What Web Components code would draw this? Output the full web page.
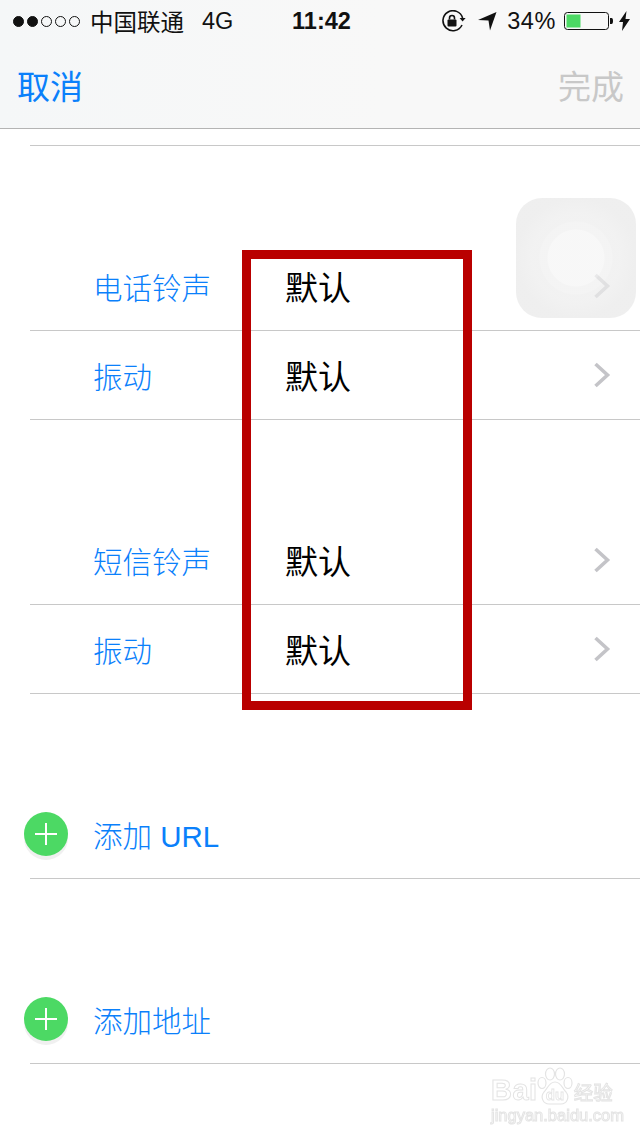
<!DOCTYPE html>
<html lang="zh">
<head>
<meta charset="utf-8">
<title>编辑联系人</title>
<style>
    html, body { margin: 0; padding: 0; background: #fff; }
    body {
        position: relative;
        width: 640px;
        height: 1136px;
        overflow: hidden;
        font-family: "Liberation Sans", "Noto Sans CJK SC", sans-serif;
    }
</style>
</head>
<body>
<status-bar></status-bar>
<nav-bar>
    <span slot="left">取消</span>
    <span slot="right">完成</span>
</nav-bar>
<list-group first></list-group>
<list-group>
    <setting-row>电话铃声<span slot="value">默认</span></setting-row>
    <setting-row>振动<span slot="value">默认</span></setting-row>
</list-group>
<list-group>
    <setting-row>短信铃声<span slot="value">默认</span></setting-row>
    <setting-row>振动<span slot="value">默认</span></setting-row>
</list-group>
<list-group><add-row>添加 URL</add-row></list-group>
<list-group><add-row>添加地址</add-row></list-group>
<assistive-touch></assistive-touch>
<red-frame></red-frame>
<baidu-mark></baidu-mark>

<script>
class StatusBar extends HTMLElement {
    constructor() {
        super();
        this.attachShadow({mode: "open"});
        this.shadowRoot.innerHTML = `
        <style>
            :host {
                display: grid;
                grid-template-columns: 1fr auto 1fr;
                align-items: center;
                height: 42px;
                padding: 0 10px 0 13px;
                color: #111;
                font-size: 23.5px;
            }
            .left, .right { display: flex; align-items: center; }
            .right { justify-content: flex-end; }
            .dots { display: flex; gap: 3px; margin-right: 10px; }
            .dots i {
                box-sizing: border-box;
                width: 11px;
                height: 11px;
                border-radius: 50%;
                border: 1px solid #111;
            }
            .dots i.on { background: #111; }
            .net { margin-left: 18px; }
            .time { font-weight: bold; font-size: 23.5px; }
            svg { display: block; }
            .pct { margin: 0 8px 0 10px; letter-spacing: .6px; }
        </style>
        <div class="left">
            <div class="dots"><i class="on"></i><i class="on"></i><i></i><i></i><i></i></div>
            <span>中国联通</span><span class="net">4G</span>
        </div>
        <div class="time">11:42</div>
        <div class="right">
            <svg width="26" height="22" viewBox="0 0 26 22">
                <path d="M21 15a10 10 0 1 1 .6-7" fill="none" stroke="#111" stroke-width="1.6"/>
                <path d="M18.6 8h6l-3 3.6z" fill="#111"/>
                <rect x="6.5" y="9.5" width="9" height="7" rx="1" fill="#111"/>
                <path d="M8.5 9.5V8a2.5 2.5 0 0 1 5 0v1.5" fill="none" stroke="#111" stroke-width="1.6"/>
            </svg>
            <svg style="margin-left:11px" width="19" height="20" viewBox="0 0 19 20">
                <path d="M0 9 18.500 1 12 19.500 10.500 9.500z" fill="#111"/>
            </svg>
            <span class="pct">34%</span>
            <svg width="50" height="20" viewBox="0 0 50 20">
                <rect x=".5" y="1.500" width="44" height="17" rx="3" fill="none" stroke="#111"/>
                <rect x="2.500" y="3.500" width="14" height="13" fill="#4cd964"/>
                <path d="M46 7h1.500a1.500 3 0 0 1 0 6H46z" fill="#111"/>
            </svg>
            <svg style="margin-left:5px" width="11" height="20" viewBox="0 0 11 20">
                <path d="M7.500 0 0 11h4l-1 9 8-12H6.500z" fill="#111"/>
            </svg>
        </div>
        `;
    }
}
customElements.define("status-bar", StatusBar);

class NavBar extends HTMLElement {
    constructor() {
        super();
        this.attachShadow({mode: "open"});
        this.shadowRoot.innerHTML = `
        <style>
            :host {
                display: flex;
                justify-content: space-between;
                align-items: center;
                height: 86px;
                padding: 0 16px 0 17px;
                font-size: 33px;
                margin-top: -42px;
                padding-top: 42px;
                background: linear-gradient(90deg, #f5f7f8, #f8f8f8 60%);
                border-bottom: 1px solid #b4b4b4;
            }
            ::slotted([slot="left"]) { color: #0a80fb; }
            ::slotted([slot="right"]) { color: #c8c8c8; }
        </style>
        <slot name="left"></slot>
        <slot name="right"></slot>
        `;
    }
}
customElements.define("nav-bar", NavBar);

class ListGroup extends HTMLElement {
    constructor() {
        super();
        this.attachShadow({mode: "open"});
        this.shadowRoot.innerHTML = `
        <style>
            :host { display: block; margin-top: 96px; }
            :host([first]) {
                margin-top: 16px;
                margin-left: 30px;
                border-bottom: 1px solid #c8c8c8;
            }
        </style>
        <slot></slot>
        `;
    }
}
customElements.define("list-group", ListGroup);

class SettingRow extends HTMLElement {
    constructor() {
        super();
        this.attachShadow({mode: "open"});
        this.shadowRoot.innerHTML = `
        <style>
            :host {
                display: block;
                margin-left: 30px;
                border-bottom: 1px solid #c8c8c8;
                font-weight: 300;
            }
            .row {
                display: grid;
                grid-template-columns: 192px 1fr auto;
                align-items: center;
                height: 88px;
                padding: 0 29px 0 63px;
                font-size: 29.5px;
                color: #0a80fb;
            }
            ::slotted([slot="value"]) { color: #000; font-size: 33px; font-weight: 400; }
            svg { display: block; }
        </style>
        <div class="row">
            <div><slot></slot></div>
            <div><slot name="value"></slot></div>
            <svg width="18" height="26" viewBox="0 0 18 26">
                <path d="M2.500 2 14.500 13 2.500 24" fill="none" stroke="#c4c4c8" stroke-width="3.600"/>
            </svg>
        </div>
        `;
    }
}
customElements.define("setting-row", SettingRow);

class AddRow extends HTMLElement {
    constructor() {
        super();
        this.attachShadow({mode: "open"});
        this.shadowRoot.innerHTML = `
        <style>
            :host {
                display: block;
                margin-left: 30px;
                border-bottom: 1px solid #c8c8c8;
                font-weight: 300;
            }
            .row {
                display: flex;
                align-items: center;
                height: 88px;
                margin-left: -6px;
                font-size: 29.5px;
                color: #0a80fb;
            }
            .plus {
                flex: none;
                width: 44px;
                height: 44px;
                margin-right: 25px;
                border-radius: 50%;
                background: #4cd964;
                box-shadow: 0 4px 0 #f0f0f0;
            }
            svg { display: block; }
        </style>
        <div class="row">
            <div class="plus">
                <svg width="44" height="44" viewBox="0 0 44 44">
                    <path d="M22 11v22M11 22h22" stroke="#fff" stroke-width="2"/>
                </svg>
            </div>
            <slot></slot>
        </div>
        `;
    }
}
customElements.define("add-row", AddRow);

// floating button on top of the list
class AssistiveTouch extends HTMLElement {
    constructor() {
        super();
        this.attachShadow({mode: "open"});
        this.shadowRoot.innerHTML = `
        <style>
            :host {
                position: absolute;
                left: 516px;
                top: 198px;
                width: 120px;
                height: 120px;
                border-radius: 26px;
                background: radial-gradient(circle at 50% 50%,
                    rgba(245,245,245,.75) 0 28px,
                    rgba(239,239,239,.7) 29px 36px,
                    rgba(236,236,236,.7) 37px 44px,
                    rgba(232,232,232,.7) 60px);
            }
        </style>
        `;
    }
}
customElements.define("assistive-touch", AssistiveTouch);

class RedFrame extends HTMLElement {
    constructor() {
        super();
        this.attachShadow({mode: "open"});
        this.shadowRoot.innerHTML = `
        <style>
            :host {
                position: absolute;
                left: 242px;
                top: 250px;
                width: 212px;
                height: 442px;
                border: 9px solid #b90000;
            }
        </style>
        `;
    }
}
customElements.define("red-frame", RedFrame);

class BaiduMark extends HTMLElement {
    constructor() {
        super();
        this.attachShadow({mode: "open"});
        this.shadowRoot.innerHTML = `
        <style>
            :host {
                position: absolute;
                left: 491px;
                top: 1066px;
                width: 116px;
                color: #fff;
                -webkit-text-stroke: 1px #e4e4e4;
                filter: blur(.4px);
            }
            .top { display: flex; align-items: flex-end; height: 41px; }
            .bai { font: bold 29px/34px "Liberation Sans", sans-serif; letter-spacing: .5px; }
            .jy { font: 19.500px/26px "Noto Sans CJK SC", sans-serif; margin-left: 1px; margin-bottom: 2px; white-space: nowrap; }
            svg { display: block; flex: none; margin-left: -1px; }
            .url { font: 16.500px/17px "Liberation Sans", sans-serif; white-space: nowrap; }
        </style>
        <div class="top">
            <span class="bai">Bai</span>
            <svg width="36" height="40" viewBox="0 0 36 40" fill="#fff" stroke="#e4e4e4" stroke-width="1.200">
                <ellipse cx="13" cy="7" rx="4.500" ry="6"/>
                <ellipse cx="23" cy="7" rx="4.500" ry="6"/>
                <ellipse cx="5" cy="16" rx="4" ry="5.500"/>
                <ellipse cx="31" cy="16" rx="4" ry="5.500"/>
                <path d="M18 15c6 0 7 6 11 10 4 5 1 12-5 12H12c-6 0-9-7-5-12 4-4 5-10 11-10z"/>
                <text x="18" y="33" font-family="Liberation Sans" font-weight="bold" font-size="15" text-anchor="middle" stroke-width=".8">du</text>
            </svg>
            <span class="jy">经验</span>
        </div>
        <div class="url">jingyan.baidu.com</div>
        `;
    }
}
customElements.define("baidu-mark", BaiduMark);
</script>
</body>
</html>
